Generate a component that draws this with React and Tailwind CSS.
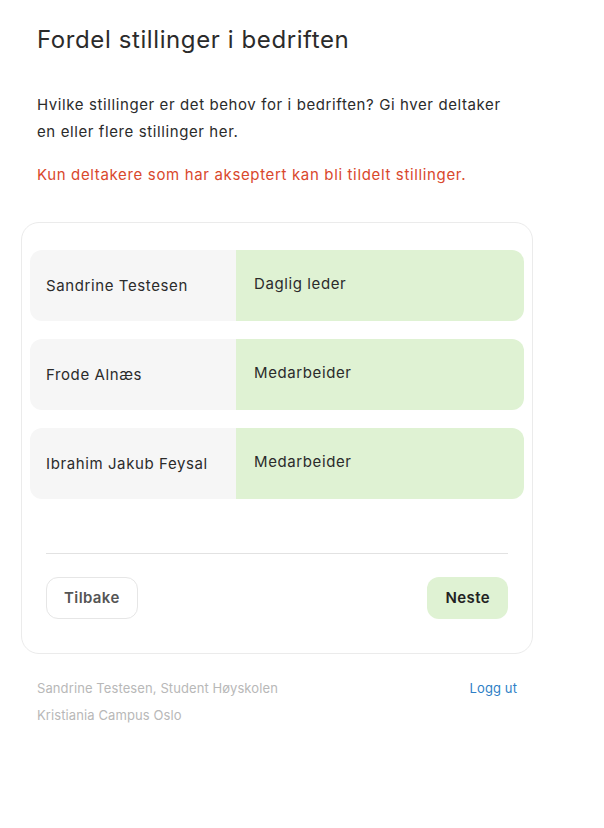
const rows = [
  { name: "Sandrine Testesen", role: "Daglig leder" },
  { name: "Frode Alnæs", role: "Medarbeider" },
  { name: "Ibrahim Jakub Feysal", role: "Medarbeider" },
];

export default function App() {
  return (
    <div className="min-h-screen bg-white font-['Inter','Liberation_Sans',sans-serif] text-[#2b2b2b]">
      <div className="w-[512px] ml-[21px] pt-[24px]">
        {/* Heading */}
        <div className="px-4">
          <h1 className="text-[24px] leading-[32px] tracking-[0.6px]">Fordel stillinger i bedriften</h1>
          <p className="mt-[35px] text-[15px] leading-[27px] tracking-[0.6px]">
            Hvilke stillinger er det behov for i bedriften? Gi hver deltaker en eller flere stillinger her.
          </p>
          <p className="mt-[16px] text-[15px] leading-[27px] tracking-[0.65px] text-[#d9482c]">
            Kun deltakere som har akseptert kan bli tildelt stillinger.
          </p>
        </div>

        {/* Card */}
        <div className="mt-[34px] rounded-[18px] border border-[#ebebeb] px-[8px] pt-[27px] pb-[34px]">
          <div className="flex flex-col gap-[18px]">
            {rows.map((r) => (
              <div key={r.name} className="flex h-[71px] overflow-hidden rounded-[12px] text-[15px] tracking-[0.6px]">
                <div className="flex w-[206px] items-center bg-[#f6f6f6] pl-[16px] pt-[2px]">{r.name}</div>
                <div className="flex-1 bg-[#dff2d3] pl-[18px] pt-[23px]">{r.role}</div>
              </div>
            ))}
          </div>

          <div className="mx-[16px] mt-[54px] border-t border-[#e2e2e2]" />

          <div className="mx-[16px] mt-[23px] flex items-center justify-between">
            <button className="h-[42px] rounded-[12px] border border-[#e6e6e6] bg-white px-[17px] text-[15px] font-semibold tracking-[0.4px] text-[#555]">
              Tilbake
            </button>
            <button className="h-[42px] rounded-[12px] bg-[#dff2d3] px-[18px] text-[15px] font-semibold tracking-[0.4px] text-[#222]">
              Neste
            </button>
          </div>
        </div>

        {/* Footer */}
        <div className="mt-[21px] flex justify-between px-4 text-[13px] leading-[27px] tracking-[0.1px]">
          <div className="text-[#b8b8b8]">
            <div>Sandrine Testesen, Student Høyskolen</div>
            <div>Kristiania Campus Oslo</div>
          </div>
          <a className="text-[#2f7fc6]">Logg ut</a>
        </div>
      </div>
    </div>
  );
}
